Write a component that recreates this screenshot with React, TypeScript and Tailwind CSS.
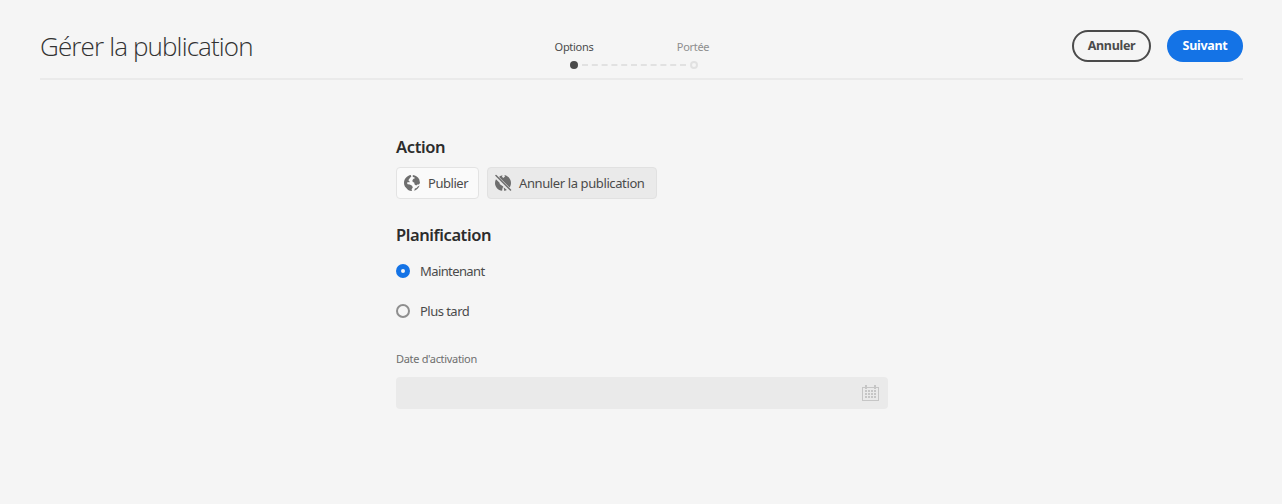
import React from "react";

function Globe({ struck = false }: { struck?: boolean }) {
  return (
    <svg width="18" height="18" viewBox="0 0 18 18" fill="#6e6e6e" className="shrink-0">
      {struck ? (
        <>
          <path d="M5.500 2.200 8.500 1.200 8 2.800l1.300 1.100L11 2.400l-.6-1.300C14 1.800 17 5 17 9c0 1.600-.5 3.200-1.400 4.400L5.500 3.500Z" />
          <path d="M2 5.200 5.800 9l-.2 1 1.800 1.200 1.900 1.300-.8 1.700-.4 2.600C4 16.300 1 13 1 9c0-1.400.4-2.700 1-3.800Z" />
          <path d="M9.600 13.200 12.900 15.900 10.300 16.900Z" />
          <path d="M2 1.500 16.500 16" fill="none" stroke="#6e6e6e" strokeWidth="1.500" strokeLinecap="round" />
        </>
      ) : (
        <>
          <path d="M7.800 1.100C4 1.600 1 5 1 9c0 1.300.3 2.500.9 3.600L5.100 16C6.200 16.700 7.600 17 9 17l-.4-1.800 1.200-1.700-.7-1.700-2.300-1.200-2.100-.4-.7-1.200.9-1 1.400.4.3-1.200-1.300-1L7.300 3.500l1-.9Z" />
          <path d="M9.800 1c2.900.3 5.300 2.100 6.500 4.600L17 9l-1.100 1.600-1.500-.2-1.200 1.100-1.600-.9-.4-2-1.500-.6-.3-1.700 1.200-1.500 1.100-.3-.3-1.200-1.600-.4Z" />
          <path d="M16.600 11.600c-.8 2.500-2.900 4.500-5.400 5.200l.7-2.300 1.600-.4 1.300-1.500Z" />
        </>
      )}
    </svg>
  );
}

function Calendar() {
  return (
    <svg width="18" height="18" viewBox="0 0 18 18" fill="#c6c6c6" shapeRendering="crispEdges">
      <path fillRule="evenodd" d="M0 3h17v14H0ZM1 4v12h15V4Z" />
      <path d="M3 1h2v4H3zM12 1h2v4h-2zM3 6h2v2H3zM6 6h2v2H6zM9 6h2v2H9zM12 6h2v2h-2zM3 9h2v2H3zM6 9h2v2H6zM9 9h2v2H9zM12 9h2v2h-2zM3 12h2v2H3zM6 12h2v2H6zM9 12h2v2H9zM12 12h2v2h-2z" />
    </svg>
  );
}

export default function App() {
  return (
    <div className="h-[504px] overflow-hidden bg-[#f5f5f5] px-[40px] font-['Noto_Sans',sans-serif] text-[13px] text-[#4b4b4b]">
      <header className="flex h-[80px] w-[1203px] items-start border-b-2 border-[#eaeaea]">
        <h1 className="mt-[27px] w-[505px] whitespace-nowrap font-['Open_Sans',sans-serif] text-[26px] font-light leading-[38px] tracking-[-0.87px] text-[#323232]">Gérer la publication</h1>
        <div className="mt-[38px] w-[176px]">
          <div className="flex justify-between whitespace-nowrap text-[11px] leading-[18px] tracking-[-0.3px]">
            <span className="w-[58px] text-center">Options</span>
            <span className="w-[56px] text-center text-[#8e8e8e]">Portée</span>
          </div>
          <div className="ml-[25px] mt-[5px] flex h-2 w-[128px] items-center">
            <span className="h-2 w-2 rounded-full bg-[#4b4b4b]" />
            <svg width="112" height="2" viewBox="0 0 112 2"><path d="M4 1h104" stroke="#e1e1e1" strokeWidth="2" strokeDasharray="6 3.800" /></svg>
            <span className="h-2 w-2 rounded-full border-2 border-[#e1e1e1]" />
          </div>
        </div>
        <div className="ml-auto mt-[30px] flex gap-4 text-[12.5px] font-bold tracking-[-0.3px]">
          <button className="h-8 w-[79px] rounded-full border-2 border-[#4b4b4b] pt-px">Annuler</button>
          <button className="h-8 w-[76px] rounded-full bg-[#1473e6] pt-px text-white">Suivant</button>
        </div>
      </header>
      <main className="ml-[356px] w-[492px] whitespace-nowrap pt-[55px]">
        <h2 className="h-8 text-[16.5px] font-semibold leading-[24px] tracking-[-0.37px] text-[#2c2c2c]">Action</h2>
        <div className="flex gap-2">
          <button className="flex h-8 w-[83px] items-center gap-[7px] rounded-[4px] border border-[#e3e3e3] bg-[#fafafa] pl-[6px] tracking-[-0.45px]"><Globe /><span className="pt-[2px]">Publier</span></button>
          <button className="flex h-8 w-[170px] items-center gap-[7px] rounded-[4px] border border-[#e1e1e1] bg-[#eaeaea] pl-[6px] tracking-[-0.39px]"><Globe struck /><span className="pt-[2px]">Annuler la publication</span></button>
        </div>
        <h2 className="mt-6 h-7 text-[16.5px] font-semibold leading-[24px] tracking-[-0.42px] text-[#2c2c2c]">Planification</h2>
        <label className="flex h-10 items-center gap-[10px] tracking-[-0.6px]">
          <span className="h-[14px] w-[14px] rounded-full border-[5px] border-[#1473e6] bg-[#f5f5f5]" /><span className="pt-[2px]">Maintenant</span>
        </label>
        <label className="flex h-10 items-center gap-[10px] tracking-[-0.53px]">
          <span className="h-[14px] w-[14px] rounded-full border-2 border-[#8e8e8e]" /><span className="pt-[2px]">Plus tard</span>
        </label>
        <div className="mt-[19px] h-[27px] text-[11px] leading-[18px] tracking-[-0.32px] text-[#6e6e6e]">Date d'activation</div>
        <div className="flex h-8 items-center justify-end rounded-[4px] bg-[#eaeaea] pr-2"><Calendar /></div>
      </main>
    </div>
  );
}
